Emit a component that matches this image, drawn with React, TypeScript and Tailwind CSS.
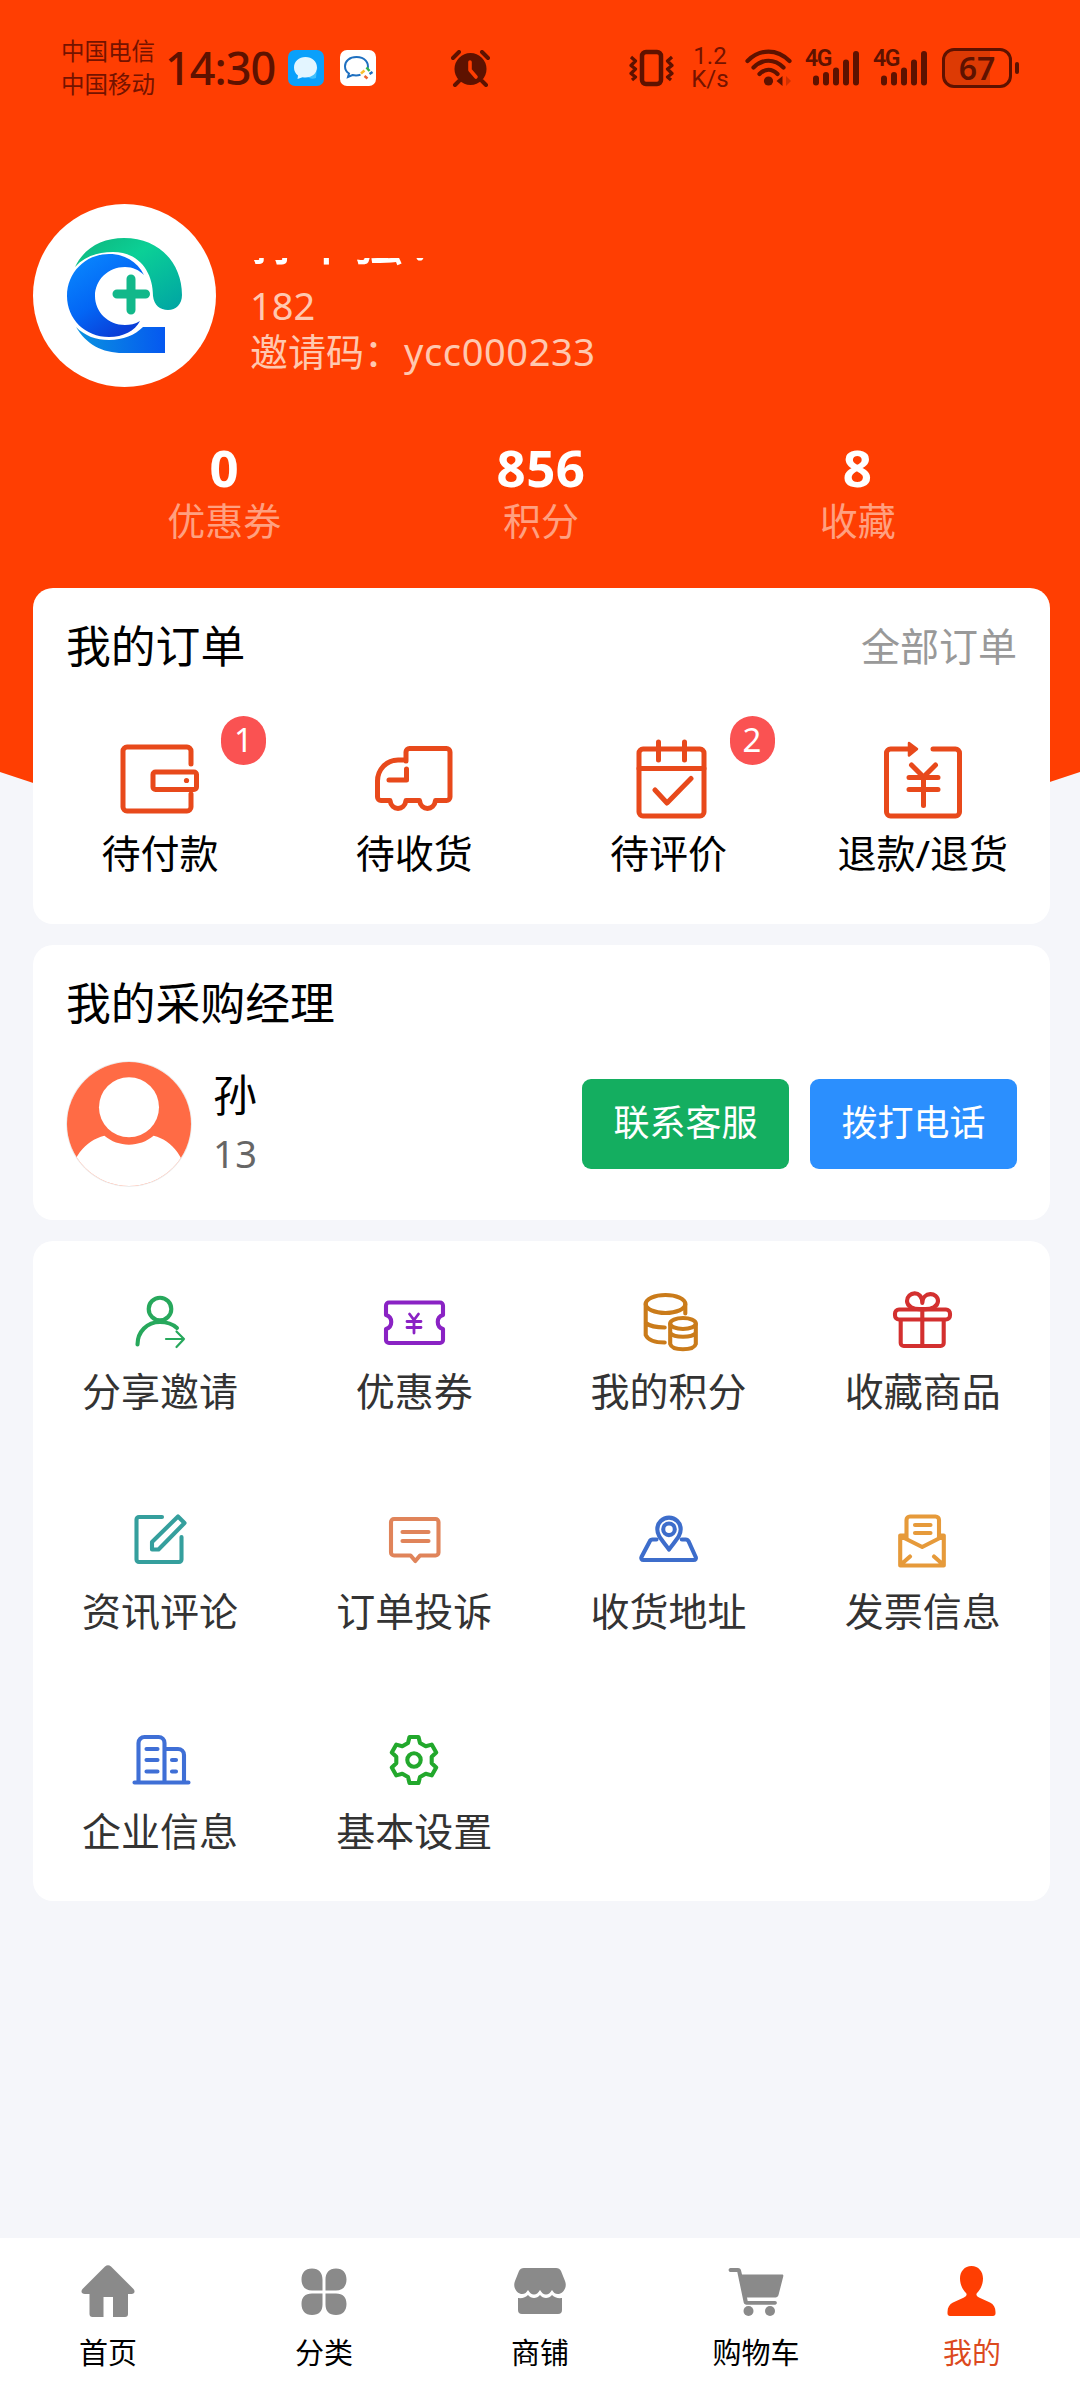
import type { ReactNode } from 'react';

interface Entry {
  label: string;
  icon: ReactNode;
  badge?: number;
}

/* ---------- status bar ---------- */

function SignalIcon() {
  return (
    <div className="relative h-[38px] w-[54px]">
      <span className="absolute left-0 top-[-1px] font-[Roboto] text-[23px] font-semibold leading-[22px] tracking-[-1.5px]">4G</span>
      <svg className="absolute inset-0" width="54" height="38" viewBox="0 0 54 38" stroke="currentColor" strokeWidth="6" strokeLinecap="round">
        <path d="M11 29.5V33.5M21 26V33.5M31 21.5V33.5M41 13.5V33.5M51 5V33.5" />
      </svg>
    </div>
  );
}

function StatusBar() {
  return (
    <div className="flex h-[136px] items-center pl-[61px] text-[#5e1200]">
      <div className="w-[96px] text-[23.5px] leading-[33.5px] text-[#741300]">
        <div>中国电信</div>
        <div>中国移动</div>
      </div>
      <div className="ml-[8px] w-[113px] text-[45px] leading-[46px] font-medium tracking-[-1px]">14:30</div>
      <svg className="ml-[10px]" width="36" height="36" viewBox="0 0 36 36">
        <rect width="36" height="36" rx="7" fill="#0aa0fb" />
        <path d="M24 24c4-1 6-4 5-7l-1 11c-3 1-6 1-8-1z" fill="#3fc0ff" />
        <path d="M17.5 7C11 7 6 11.5 6 17.5c0 3.5 1.5 6 4 8l-.5 3.5 5-1.8c8 1.5 14.5-3 14.5-9.7C29 11.5 24 7 17.5 7z" fill="#e3f5ff" />
      </svg>
      <svg className="ml-[16px]" width="36" height="36" viewBox="0 0 36 36">
        <rect width="36" height="36" rx="7" fill="#fff" />
        <path d="M27.5 19c2-6.5-3-12-11-12C9.5 7 5 11 5 16.2c0 3.3 1.5 5.6 4 7.3L8 27l4.5-2c2.5.6 5 .6 8-.2" fill="none" stroke="#1d6fc0" strokeWidth="2" />
        <path d="M26.5 17.5l3 3.5" stroke="#33b44a" strokeWidth="2.5" />
        <path d="M29.5 24l3-2" stroke="#1d6fc0" strokeWidth="2.5" />
        <path d="M24.5 26l3 2.5" stroke="#ec6530" strokeWidth="2.5" />
        <path d="M21 23.5l3.5-3" stroke="#f8c02c" strokeWidth="2.5" />
      </svg>
      <svg className="ml-[75px]" width="39" height="37" viewBox="0 0 39 37">
        <circle cx="19.5" cy="19" r="16" fill="currentColor" />
        <path d="M2 8l6-6M37 8l-6-6M8 31l-4 4M31 31l4 4" stroke="currentColor" strokeWidth="4" strokeLinecap="round" />
        <path d="M19 12v8l6 7" fill="none" stroke="#ff3e02" strokeWidth="3.6" strokeLinecap="round" strokeLinejoin="round" />
      </svg>
      <svg className="ml-[139px]" width="45" height="38" viewBox="0 0 45 38" fill="none" stroke="currentColor" strokeWidth="4" strokeLinejoin="round">
        <rect x="13" y="3" width="19" height="32" rx="4" strokeWidth="4.5" />
        <path d="M2 8l4.5 4L2 16.5 6.5 20 2 24.5 6.5 28 3 31M43 8l-4.5 4 4.5 4.5-4.5 3.5 4.5 4.5-4.5 3.5 3.5 3" strokeWidth="3.2" />
      </svg>
      <div className="ml-[16px] w-[40px] text-center font-[Roboto] text-[24px] leading-[23px] text-[#741300]">
        1.2
        <br />
        K/s
      </div>
      <svg className="ml-[15px]" width="48" height="38" viewBox="0 0 48 38" fill="none" stroke="currentColor" strokeWidth="4.2" strokeLinecap="round">
        <path d="M2.5 12C15 -.5 32 -.5 44.5 12M8.5 18.5c9-9 21-9 30 0M14.5 25c5.5-5.5 12.5-5.5 18 0" />
        <circle cx="23.5" cy="32" r="4.6" fill="currentColor" stroke="none" />
        <path d="M37.5 27v10l-6-5z" fill="currentColor" stroke="none" />
        <path d="M41 27v10l5-5z" fill="currentColor" stroke="none" opacity=".3" />
      </svg>
      <div className="ml-[12px] flex gap-[14px]">
        <SignalIcon />
        <SignalIcon />
      </div>
      <div className="ml-[15px] flex items-center gap-[3px]">
        <div className="flex h-[40px] w-[70px] items-center justify-center rounded-[12px] border-[3px] border-current bg-linear-to-r from-[#dd3a04] from-70% to-[#ff3e02] to-70% text-[32px] font-semibold leading-none">
          67
        </div>
        <div className="h-[12px] w-[4px] rounded-full bg-current" />
      </div>
    </div>
  );
}

/* ---------- profile header ---------- */

function Logo() {
  return (
    <svg className="size-[183px] rounded-full bg-white" viewBox="0 0 183 183">
      <defs>
        <linearGradient id="leaf" x1="0" y1="0" x2="1" y2="1">
          <stop offset="0" stopColor="#0fb57c" />
          <stop offset=".4" stopColor="#0bd096" />
          <stop offset="1" stopColor="#00a3a4" />
        </linearGradient>
        <linearGradient id="ring" x1="0" y1="0" x2=".6" y2="1">
          <stop offset="0" stopColor="#0a8cff" />
          <stop offset=".6" stopColor="#0366f5" />
          <stop offset="1" stopColor="#0a3fd8" />
        </linearGradient>
        <linearGradient id="base" x1="0" y1="0" x2="1" y2="0">
          <stop offset="0" stopColor="#0a93e0" />
          <stop offset="1" stopColor="#0558f0" />
        </linearGradient>
      </defs>
      <path d="M42 63C51 44 69 34 91 34c36 0 58 26 58 57 0 9-6 15-14 15s-14-5-15-14c0-24-14-44-40-44-16 0-29 5-38 15z" fill="url(#leaf)" />
      <path d="M111 71C104 57 91 50 76 50 52 50 34 69 34 92s18 41 42 41c14 0 26-6 31-16-5 3-10 4-15 4-17 0-30-13-30-29s13-29 30-29c8 0 14 3 19 8z" fill="url(#ring)" />
      <path d="M43 123c9 9 20 13 33 13 14 0 26-5 34-13h22v26H90c-21 0-37-9-47-26z" fill="url(#base)" />
      <path d="M98 75v31M84 90h28.5" stroke="#12b88a" strokeWidth="9" strokeLinecap="round" />
    </svg>
  );
}

function Stat({ value, label }: { value: string; label: string }) {
  return (
    <div className="flex flex-col items-center">
      <span className="text-[51px] font-bold leading-[54px] tracking-[0.5px] text-white">{value}</span>
      <span className="mt-[4px] text-[38px] leading-[44px] text-[#ffa080]">{label}</span>
    </div>
  );
}

function Profile() {
  return (
    <div className="mt-[68px] flex h-[183px] pl-[33px]">
      <Logo />
      <div className="ml-[34px] pt-[54px] text-[38px] leading-[46px] text-[#ffc8b0]">
        {/* name is masked, only the lower edge stays visible */}
        <div className="flex h-[8px] items-end overflow-hidden text-[51px] font-medium leading-[52px] text-white">
          <span>孙中强</span>
          <span className="ml-[10px]">.</span>
        </div>
        <div className="mt-[16px]">182</div>
        <div>
          邀请码：<span className="ml-[2px] tracking-[0.6px]">ycc000233</span>
        </div>
      </div>
    </div>
  );
}

/* ---------- orders ---------- */

const orders: Entry[] = [
  {
    label: '待付款',
    badge: 1,
    icon: (
      <>
        <path d="M71 25V12a4 4 0 0 0-4-4H7a4 4 0 0 0-4 4v56a4 4 0 0 0 4 4h60a4 4 0 0 0 4-4V55" />
        <rect x="33" y="33" width="43.5" height="17.5" rx="2.5" />
        <circle cx="66.5" cy="41.5" r="2.6" fill="currentColor" stroke="none" />
      </>
    ),
  },
  {
    label: '待收货',
    icon: (
      <>
        <path d="M32 22V13a3.5 3.5 0 0 1 3.5-3.5H72.5A3.5 3.5 0 0 1 76 13V58a3.5 3.5 0 0 1-3.5 3.5H61.5c-1.5 10.5-14.5 10.5-16 0H32c-1.5 10.5-14.5 10.5-16 0H7A3.5 3.5 0 0 1 3.5 58V42C3.5 31 12 21 24 21h8" />
        <path d="M32.5 30V41H15" />
      </>
    ),
  },
  {
    label: '待评价',
    badge: 2,
    icon: (
      <>
        <rect x="10" y="10" width="65" height="67" rx="4" />
        <path d="M10 29.5h65M29.5 3v18M55.5 3v18M26 51l12 13 24-24.5" />
      </>
    ),
  },
  {
    label: '退款/退货',
    icon: (
      <>
        <path d="M27 10H7.5a4 4 0 0 0-4 4v59a4 4 0 0 0 4 4h65a4 4 0 0 0 4-4V14a4 4 0 0 0-4-4H50" />
        <path d="M26 4l8 6-8 6.5z" fill="currentColor" strokeWidth="2.5" />
        <path d="M28.5 26l12 12 12-12M40.5 38v28.5M26 38.5h29M26 50.5h29" />
      </>
    ),
  },
];

function OrdersCard() {
  return (
    <section className="h-[336px] rounded-[20px] bg-white">
      <div className="flex h-[115px] items-center justify-between px-[33px]">
        <h2 className="text-[44.8px] leading-[60px]">我的订单</h2>
        <span className="text-[39px] leading-[56px] text-[#999]">全部订单</span>
      </div>
      <div className="grid grid-cols-4 pt-[36px]">
        {orders.map((o) => (
          <div key={o.label} className="relative flex flex-col items-center">
            <svg
              className="size-[80px] text-[#e8491b]"
              viewBox="0 0 80 80"
              fill="none"
              stroke="currentColor"
              strokeWidth="5"
              strokeLinecap="round"
              strokeLinejoin="round"
            >
              {o.icon}
            </svg>
            <span className="mt-[6px] text-[39px] leading-[56px]">{o.label}</span>
            {o.badge && (
              <span className="absolute left-[188px] top-[-23px] flex h-[49px] w-[45px] items-center justify-center rounded-full bg-[#fa5252] pb-[2px] text-[33px] leading-none text-white">
                {o.badge}
              </span>
            )}
          </div>
        ))}
      </div>
    </section>
  );
}

/* ---------- manager ---------- */

function ManagerCard() {
  return (
    <section className="h-[275px] rounded-[20px] bg-white px-[33px] pt-[28px]">
      <h2 className="text-[44.8px] leading-[60px]">我的采购经理</h2>
      <div className="mt-[28px] flex h-[126px] items-center">
        <svg className="size-[126px] rounded-full border border-[#ececec]" viewBox="0 0 126 126">
          <rect width="126" height="126" fill="#ff6b45" />
          <path d="M0 126C4 98 18 80 38 75c14 12 36 12 50 0 20 5 32 23 38 51z" fill="#fff" />
          <circle cx="63" cy="46" r="30.5" fill="#fff" />
        </svg>
        <div className="ml-[21px] w-[46px] overflow-hidden pb-[2px]">
          <div className="text-[44px] leading-[60px]">孙</div>
          <div className="text-[38px] leading-[56px] tracking-[0.5px] text-[#666]">138</div>
        </div>
        <div className="ml-auto flex gap-[21px] text-[36px] text-white">
          <button className="h-[90px] w-[207px] rounded-[9px] bg-[#14ae60] pb-[2px]">联系客服</button>
          <button className="h-[90px] w-[207px] rounded-[9px] bg-[#2b8ffe] pb-[2px]">拨打电话</button>
        </div>
      </div>
    </section>
  );
}

/* ---------- services ---------- */

const services: (Entry & { color: string })[] = [
  {
    label: '分享邀请',
    color: 'text-[#27a85c]',
    icon: (
      <>
        <circle cx="32" cy="20" r="11.3" />
        <path d="M9.5 55.5C9.5 43 19 33 32 33c7 0 12.5 2 17 6" />
        <path d="M38 50h18M48.5 42.5L56 50l-7.5 8" strokeWidth="2.2" />
      </>
    ),
  },
  {
    label: '优惠券',
    color: 'text-[#8a22c4]',
    icon: (
      <>
        <path d="M7 13.5h51a3 3 0 0 1 3 3V26c-7 2-7 12 0 14v11a3 3 0 0 1-3 3H7a3 3 0 0 1-3-3V40c7-2 7-12 0-14v-9.5a3 3 0 0 1 3-3z" />
        <path d="M27.5 25l4.5 6 4.5-6M32 31v13M25 32.5h14M25 38.5h14" strokeWidth="2.8" />
      </>
    ),
  },
  {
    label: '我的积分',
    color: 'text-[#ca7b1a]',
    icon: (
      <>
        <ellipse cx="28.5" cy="15" rx="19.8" ry="9" />
        <path d="M8.7 15v31c2 4.5 9 7.5 19 7.5M8.7 34c4 3 10 4.5 19 4.5M48.3 15v9.5" />
        <ellipse cx="46" cy="34.5" rx="12.8" ry="5.5" />
        <path d="M33.2 35v20c2 7 23.5 7 25.6 0V35M33.2 44c4 5 21.6 5 25.6 0" />
      </>
    ),
  },
  {
    label: '收藏商品',
    color: 'text-[#d3302f]',
    icon: (
      <>
        <rect x="4" y="20.5" width="55" height="10" rx="4" />
        <path d="M9.7 31v23a3 3 0 0 0 3 3h37a3 3 0 0 0 3-3V31M31.3 20V57M31.3 20C22 21 16 17 16 12c0-9 15-12 15.3 2C31.5 2 47 3 47 12c0 5-6 9-15.7 8z" />
      </>
    ),
  },
  {
    label: '资讯评论',
    color: 'text-[#359f9d]',
    icon: (
      <path d="M34 8H11a2.5 2.5 0 0 0-2.5 2.5v40A2.5 2.5 0 0 0 11 53h40a2.5 2.5 0 0 0 2.5-2.5V28M24 40.5V33L50 7.5l6.5 6.5-26 26.5z" />
    ),
  },
  {
    label: '订单投诉',
    color: 'text-[#e0845a]',
    icon: (
      <>
        <path d="M12 10h41.5a3 3 0 0 1 3 3v30.5a3 3 0 0 1-3 3H38l-4.7 5.5-4.7-5.5H12a3 3 0 0 1-3-3V13a3 3 0 0 1 3-3z" />
        <path d="M20.5 23h26M20.5 32h26" />
      </>
    ),
  },
  {
    label: '收货地址',
    color: 'text-[#3d6dcb]',
    icon: (
      <>
        <path d="M32 40.5C25 31 20.3 27 20.3 20.3a11.7 11.7 0 0 1 23.4 0C43.7 27 39 31 32 40.5z" />
        <circle cx="32" cy="20.3" r="5.8" />
        <path d="M19.5 30.5h-4a3 3 0 0 0-2.7 1.7L4.5 48c-.8 1.5.2 3 2 3h50.2c1.8 0 2.8-1.5 2-3L51.5 32.2a3 3 0 0 0-2.7-1.7h-4" />
      </>
    ),
  },
  {
    label: '发票信息',
    color: 'text-[#e69a3a]',
    icon: (
      <>
        <path d="M15.5 29V11a3.5 3.5 0 0 1 3.5-3.5h25.5A3.5 3.5 0 0 1 48 11v18" />
        <path d="M15 26.5H9.2V56.5H52.8V26.5H48M9.2 27l22 11 21.6-11M10 55.5l9-8M52 55.5l-9-8M24 16h15.5M24 24h15.5" />
      </>
    ),
  },
  {
    label: '企业信息',
    color: 'text-[#3f6fd6]',
    icon: (
      <path d="M6.5 53.5h54M10.5 53V14a6 6 0 0 1 6-6h14a6 6 0 0 1 6 6v39M36.5 20H50a6 6 0 0 1 6 6v27M18.5 20h11M18.5 31h11M18.5 42.5h11M44 31h4M44 42.5h4" />
    ),
  },
  {
    label: '基本设置',
    color: 'text-[#22a82c]',
    icon: (
      <g transform="translate(32 31)">
        <path d="M-6-17L-4.5-23H4.5L6-17 11.7-13.7 17.7-15.4 22.2-7.6 17.7-3.3V3.3L22.2 7.6 17.7 15.4 11.7 13.7 6 17 4.5 23H-4.5L-6 17-11.7 13.7-17.7 15.4-22.2 7.6-17.7 3.3V-3.3L-22.2-7.6-17.7-15.4-11.7-13.7z" />
        <circle r="6.7" />
      </g>
    ),
  },
];

function ServicesCard() {
  return (
    <section className="grid h-[660px] grid-cols-4 grid-rows-3 rounded-[20px] bg-white">
      {services.map((s) => (
        <div key={s.label} className="flex flex-col items-center pt-[48px]">
          <svg
            className={`size-[64px] ${s.color}`}
            viewBox="0 0 64 64"
            fill="none"
            stroke="currentColor"
            strokeWidth="4.1"
            strokeLinecap="round"
            strokeLinejoin="round"
          >
            {s.icon}
          </svg>
          <span className="mt-[10px] text-[39px] leading-[56px] text-[#333]">{s.label}</span>
        </div>
      ))}
    </section>
  );
}

/* ---------- tab bar ---------- */

const tabs: (Entry & { active?: boolean })[] = [
  {
    label: '首页',
    icon: (
      <path d="M25 3.5a4.5 4.5 0 0 1 6 0L53.5 26c2 2.5 1 5-2 5H48v20a3 3 0 0 1-3 3H33V34H23.5v20H12.5a3 3 0 0 1-3-3V31H5c-3.5 0-4.5-2.5-2.5-5z" />
    ),
  },
  {
    label: '分类',
    icon: (
      <path d="M16 5.5c7 0 10.5 4.5 10.5 11v11H16c-7 0-10.5-4.5-10.5-11s3.5-11 10.5-11zM40 5.5c7 0 10.5 4.5 10.5 11s-3.5 11-10.5 11H29.5v-11c0-6.500 3.500-11 10.500-11zM16 30.500h10.500v11C26.500 48 23 52 16 52S5.500 47.500 5.500 41 9 30.500 16 30.500zM29.500 30.500H40c7 0 10.500 4 10.500 10.500S47 52 40 52s-10.500-4-10.500-10.500z" />
    ),
  },
  {
    label: '商铺',
    icon: (
      <path d="M12 5h32c2.5 0 4 1.2 5 3l4 10c2.5 6-1.500 12-6 13-3.500.5-5.500-1.500-7-4-2 3-3.500 4.500-6 4.500s-4-1.500-6-4.500c-2 3-3.500 4.500-6 4.500s-4-1.500-6-4.500c-1.500 2.500-3.500 4.500-7 4C4.500 30 .5 24 3 18L7 8c1-1.800 2.500-3 5-3zM6 35c4 .5 8-.5 10-3 3 4 9 4 12 0 3 4 9 4 12 0 2 2.500 6 3.500 10 3v12a4 4 0 0 1-4 4H10a4 4 0 0 1-4-4z" />
    ),
  },
  {
    label: '购物车',
    icon: (
      <>
        <path d="M2.5 5H10c1.5 0 2.5.8 3 2.2l1 4.3h40c1 0 1.6.8 1.3 1.8L50.5 32c-.4 1.5-1.5 2.5-3 2.5H19l.7 3.5H47c2.5 0 2.5 3.7 0 3.7H18.5c-1.5 0-2.5-.8-2.8-2.2L9.3 9H2.5C0 9 0 5 2.5 5z" />
        <circle cx="20.5" cy="48" r="5" />
        <circle cx="42" cy="48" r="5" />
      </>
    ),
  },
  {
    label: '我的',
    active: true,
    icon: (
      <path d="M27.5 3C34.5 3 39 8.5 39 15.5c0 6-2.5 11-6 14.5-1.5 2 0 3.5 2 4.5l11 5c3.5 1.7 5.5 5 5.5 9.5v1.5c0 1.5-1 2.5-2.5 2.5H6c-1.5 0-2.5-1-2.5-2.5V49c0-4.5 2-7.8 5.5-9.5l11-5c2-1 3.5-2.5 2-4.5-3.5-3.5-6-8.5-6-14.5C16 8.5 20.5 3 27.5 3z" />
    ),
  },
];

function TabBar() {
  return (
    <nav className="grid h-[150px] grid-cols-5 bg-white">
      {tabs.map((t) => (
        <div key={t.label} className="flex flex-col items-center pt-[25px]">
          <svg className={`size-[56px] ${t.active ? 'text-[#ff3e02]' : 'text-[#8a8a8a]'}`} viewBox="0 0 56 56" fill="currentColor">
            {t.icon}
          </svg>
          <span className={`mt-[13px] text-[29px] leading-[42px] ${t.active ? 'text-[#dc4a1e]' : 'text-black'}`}>
            {t.label}
          </span>
        </div>
      ))}
    </nav>
  );
}

export default function App() {
  return (
    <div className="relative flex h-[2388px] w-[1080px] flex-col overflow-hidden bg-[#f5f6fa] font-['Noto_Sans','Noto_Sans_CJK_SC',sans-serif] text-black">
      {/* curved header backdrop */}
      <svg className="absolute left-0 top-0" width="1080" height="880" viewBox="0 0 1080 880">
        <path d="M0 0H1080V772Q540 956 0 772z" fill="#ff3e02" />
      </svg>

      <div className="relative flex flex-1 flex-col">
        <StatusBar />
        <Profile />
        <div className="ml-[66px] mr-[64px] mt-[53px] grid h-[148px] grid-cols-3 content-start">
          <Stat value="0" label="优惠券" />
          <Stat value="856" label="积分" />
          <Stat value="8" label="收藏" />
        </div>
        <main className="flex flex-col gap-[21px] pl-[33px] pr-[30px]">
          <OrdersCard />
          <ManagerCard />
          <ServicesCard />
        </main>
      </div>
      <TabBar />
    </div>
  );
}
